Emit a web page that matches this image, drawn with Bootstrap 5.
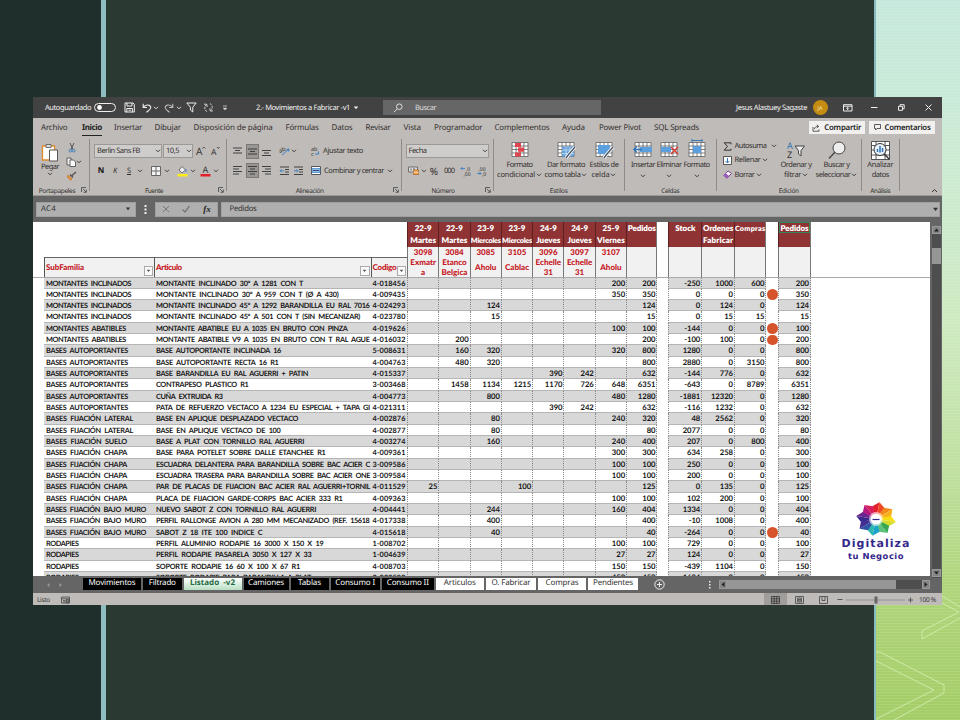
<!DOCTYPE html>
<html lang="es" data-bs-theme="light">
<head>
<meta charset="utf-8">
<title>2.- Movimientos a Fabricar -v1</title>
<link href="https://cdn.jsdelivr.net/npm/bootstrap@5.3.0/dist/css/bootstrap.min.css" rel="stylesheet">
<style>
html,body{width:960px;height:720px;overflow:hidden}
body{font-family:"Noto Sans","Open Sans",sans-serif;font-size:7.5px;line-height:10px;color:#383838;text-rendering:geometricPrecision;
 background:linear-gradient(90deg,#1f2f2b 0 101px,#8fbdc0 101px 106px,#2a3932 106px 874px,#86bcc0 874px 876px,transparent 876px),
 repeating-linear-gradient(0deg,rgba(255,255,255,.1) 0 1px,transparent 1px 3px),
 linear-gradient(180deg,#c6e8dc 0,#cbebd5 20%,#cdeac0 45%,#bfe0a0 65%,#aed57a 82%,#a3cd66 100%)}
svg{display:block;overflow:visible;fill:none;stroke-linecap:butt}
.deco{position:absolute;left:876px;top:580px}
.win{width:909px;height:508px;margin:97px 0 0 33px;background:#656565;overflow:hidden;position:relative}
.trk{display:grid;align-items:center;white-space:nowrap}
.trk>*{min-width:0}
.trk.mid{justify-items:center}
/* title bar */
.tbar{height:21px;background:#424242;color:#f2f2f2;grid-template-columns:12px 49px 29.5px 18.5px 11px 10.5px 12.5px 10px 16.5px 19px 34.5px 97px 6px 24px 218px 135px 76.5px 30.5px 28px 27px 27px 14px}
.toggle{width:22px;height:9px;border:1px solid #eee;border-radius:5px;padding-left:1.5px}
.srch{height:15px;background:#666;color:#ddd;padding-left:10px}
.avatar{width:15px;height:15px;background:#c48d12;font-size:5.5px;color:#f7e3b0}
/* ribbon */
.ribbon{height:78px;background:#bfbbb8;border-bottom:1px solid #999;color:#333130}
.tabs{height:19px;font-size:8px;grid-template-columns:8px 41px 32px 40.5px 39px 92px 46px 34px 38px 30.5px 60.5px 67.5px 37px 55px 154.5px 60.5px 66px}
.tabs .on{font-weight:700;color:#222;border-bottom:1.6px solid #222;width:20px;height:17px;padding-top:4px}
.rbtn{height:13px;background:#f1f0ef;color:#222;font-weight:600;font-size:7.8px}
.grp{height:52px;margin-top:2px;border-right:1px solid #8f8b88;position:relative;flex:none}
.grp .cap{position:absolute;bottom:-5px;left:0;right:0;text-align:center;font-size:6.5px}
.grp .lch{position:absolute;bottom:-2px;right:2px}
.w57{width:57px}.w137{width:137px}.w174{width:174.5px}.w92{width:92px}.w131{width:131.5px}.w91{width:91.5px}.w146{width:145.5px}.w37{width:37.5px}
.combo{background:#cfcdcb;border:1px solid #9b9896;height:14px}
.combo span{margin-left:2px}
.sel{background:#999693;border:1px solid #7b7876;width:13px;height:15px;display:flex;align-items:center;justify-content:center}
.r1{height:20px;padding-top:4px}.r2{height:18px;margin-top:2.5px}
.f1{grid-template-columns:4px 68px 1px 30px 1px 14px 14px}
.f2{grid-template-columns:4px 14px 14px 14px 8px 4px 15px 8px 3px 16px 6px 2px 15px 6px}
.a1{grid-template-columns:3px 15px 14px 14px 4px 14px 6px 11px 14px 42px}
.a2{grid-template-columns:3px 15px 14px 14px 4px 14px 14px 4px 14px 62px 10px}
.n1{grid-template-columns:4px 83px}.n2{grid-template-columns:3px 17px 5px 15px 15px 18px 15px}
.big{line-height:10px;text-align:center}
.big svg.d-inline{margin-left:-1px}
.st{grid-template-columns:52px 41px 35px;justify-items:center;align-items:start}
.ce{grid-template-columns:5px 26px 26px 29px;justify-items:center;align-items:start}
.ed{grid-template-columns:6px 55px 37px 44px;align-items:start}
.ed3{grid-template-columns:12px 32px 10px;height:14.3px}
.ico{height:21px;display:flex;align-items:center;justify-content:center}
.pct{font-size:10px}.bold8{font-size:8px;color:#111}
/* formula bar */
.fbar{height:26px;padding-top:6px;color:#333;font-size:7.8px}
.fbox{height:14.5px;background:#afafaf;border:1px solid #a0a0a0}
.nb{width:100px;margin-left:3px}.dots{margin:3px 7.5px 0 8px}.fx{width:63.5px}.fi{width:719px;margin-left:2.5px}
.fxs{font-family:"Liberation Serif",serif;font-size:9px;color:#222}
/* sheet */
.sheet{width:896.5px;height:353.5px;background:#fff;overflow:hidden;position:relative;color:#161616;font-family:Lato,"Open Sans",sans-serif;font-size:7.7px;font-weight:700}
.cols{display:grid;padding-left:11px;grid-template-columns:110px 216.5px 36.5px repeat(7,31.3px) 31.4px 11px 32.8px 32.7px 32.5px 11.5px 33px}
.hd{height:24.5px;background:#8f3334;color:#fff;line-height:12px;text-align:center;font-size:8px;font-weight:800;border-left:1px solid #5c2020;white-space:nowrap}
.hd .tight{font-size:7.2px}
.sb{height:30px;background:#f1f1f1;color:#c5161d;text-align:center;line-height:10px;border-left:1px solid #777;font-size:8px;font-weight:900}
.sb .one{padding-top:5px}
.lf{height:20px;margin-top:10px;background:#f1f1f1;color:#c5161d;border-left:1px solid #555;border-top:1px solid #666;font-size:8px;font-weight:900;padding:4.5px 1px 0 1px;white-space:nowrap}
.rr{border-right:1px solid #777}
.fil{width:9.5px;height:9.5px;border:1px solid #aaa;background:#fafafa;margin-top:4px;color:#555}
.row-d{height:11.33px;line-height:11px}
.row-d>div{overflow:hidden;white-space:pre;padding-right:1px;border-bottom:.6px solid #b5b5b5}
.row-d>.v{text-align:right;border-left:1px dotted #888;letter-spacing:-.05px}
.row-d>.e{border-right:1px dotted #888}
.row-d>.tx{padding-left:2px;font-size:7.3px;word-spacing:2px}
.row-d>.gap{border:0;padding:0;background:none;overflow:visible}
.odd>div{background:#d8d8d8}
.dot{width:10.8px;height:10.8px;background:#d5542b;border-radius:50%;margin:.4px 0 0 .3px}
.frz{border-top:1px solid #a9a9a9;height:0}
.act{outline:1px solid #35875a;outline-offset:-1px;height:11px}
.logo{position:absolute;left:807px;top:280px;width:72px;color:#33278a;font-family:"DejaVu Sans",sans-serif;text-align:center;line-height:12px}
.logo .l1{font-size:11px;font-weight:700;margin-top:2px}.logo .l2{font-size:8.4px;font-weight:700}
.vsc{width:9px;margin-left:2px;background:#4e4e4e;height:352px}
.sbtn{background:#858585;height:8px;border:1px solid #999}
.thumb{background:#969696;height:16px;margin-top:14px}
.vfill{height:305px}
/* sheet tabs and status */
.stabs{height:15px;font-size:8px}
.stabs .t{height:12px;background:#000;color:#fff;line-height:9px;text-align:center;white-space:nowrap;margin-right:2px}
.stabs .l{background:#fff;color:#333}
.stabs .c{background:linear-gradient(#fff,#b9dfc3);color:#1d6b41;font-weight:700}
.s1{width:58px}.s2{width:38.5px}.s3{width:58px}.s4{width:45px}.s5{width:38px}.s6{width:49.5px}.s7{width:51.5px}.s8{width:48.5px}.s9{width:50px}.s10{width:48px}.s11{width:50px}
.stabs svg,.nav-ar{flex:none}
.nav-ar{width:50px;padding:4px 0 0 13px;gap:9px}
.plus{margin:1px 0 0 14px}.dots2{margin:3px 0 0 44px}
.hsc{width:211px;height:9px;background:#4e4e4e;margin:2px 0 0 8px}
.hth{width:169px;height:9px;background:#969696}
.sq{width:8px;height:9px}
.stat{height:13px;background:#bfbbb8;font-size:6.6px;grid-template-columns:4px 24px 703px 23px 24px 24px 10px 60px 14px 23px}
.foot{height:1.500px;background:#1b1b1b}
.view{background:#a09d9a;height:13px;width:23px;display:grid;place-items:center}
</style>
<script src="https://cdn.jsdelivr.net/npm/bootstrap@5.3.0/dist/js/bootstrap.bundle.min.js"></script>
</head>
<body>
<svg width="0" height="0" class="position-absolute"><defs>
<symbol id="cv" viewBox="0 0 6 4"><path d="M1 .8 3 2.8 5 .8" stroke="currentColor" fill="none" stroke-width=".9"/></symbol>
<symbol id="tri" viewBox="0 0 6 4"><path d="M.8.5h4.4L3 3.2z" fill="currentColor"/></symbol>
<symbol id="lch" viewBox="0 0 6 6"><path d="M.5 5V.5H5M2 2l3 3M5.3 2.6v2.7H2.6" stroke="#444" fill="none" stroke-width=".8"/></symbol>
<symbol id="gr" viewBox="0 0 18 16"><path d="M.5.5h17v15H.5z" fill="#fff"/><path d="M.5.5h17v15H.5zM.5 4.3h17M.5 8h17M.5 11.7h17M4.8.5v15M9 .5v15M13.2.5v15" stroke="#555" fill="none" stroke-width=".8"/></symbol>
</defs></svg>

<svg class="deco" width="84" height="140" stroke="#d3ecae" stroke-width=".9"><path d="M0 72h4L68 105v8L18 140M0 81 58 110 0 139M84 38 46 59v-8L83 32 66 23M66 16 84 27"/></svg>

<div class="win">
 <div class="tbar trk">
  <i></i><span data-w="46">Autoguardado</span>
  <div class="toggle d-flex align-items-center"><svg width="5" height="5"><circle cx="2.5" cy="2.5" r="2.4" fill="#fff"/></svg></div>
  <svg width="11" height="11" viewBox="0 0 11 11" stroke="#eee"><path d="M1 1h8l1.3 1.3V10H1zM3 1v3h5V1M2.8 10V6.5h5.6V10M4.5 8.2h2.4"/></svg>
  <svg width="10" height="10" viewBox="0 0 10 10" stroke="#eee"><path d="M1.2.8v3.7H5M1.3 4.4C3.5 1 8.8 1.2 8.8 4.8 8.6 6.6 6 7.8 4.4 9.4" stroke-width="1.1"/></svg>
  <svg width="6" height="4"><use href="#cv"/></svg>
  <svg width="10" height="10" viewBox="0 0 10 10" stroke="#bbb"><path d="M8.8.8v3.7H5M8.7 4.4C6.5 1 1.2 1.2 1.2 4.8 1.4 6.6 4 7.8 5.6 9.4" stroke-width="1.1"/></svg>
  <svg width="6" height="4"><use href="#cv"/></svg>
  <svg width="11" height="11" viewBox="0 0 11 11" stroke="#eee"><path d="M.8 1h9.4L6.8 5.2V10L4.4 8V5.2z"/></svg>
  <svg width="11" height="11" viewBox="0 0 11 11" stroke="#ccc"><path d="M1 2.2h3v3M4 2.2C1 4 1 8 4 9.5M10 9H7V6M7 9c3-1.6 3-5.6 0-7.5" stroke-dasharray="2.5 .8"/></svg>
  <svg width="6" height="6" stroke="#ddd"><path d="M1 1h4M1.3 3.2 3 4.800 4.700 3.200z" fill="#ddd" stroke-width=".7"/></svg>
  <span data-w="94">2.- Movimientos a Fabricar -v1</span>
  <svg width="6" height="4"><use href="#tri"/></svg><i></i>
  <div class="srch d-flex align-items-center"><svg width="10" height="10" stroke="#ddd"><circle cx="6.3" cy="3.7" r="2.800"/><path d="M4.300 5.700 1 9.200"/></svg><span class="ms-2 ps-1" data-w="21">Buscar</span></div>
  <i></i><span data-w="71">Jesus Alastuey Sagaste</span>
  <div class="avatar rounded-circle d-flex align-items-center justify-content-center">JA</div>
  <svg width="10" height="8" stroke="#eee"><path d="M.5.7h8.500v6.300H.5zM.5 2.200h8.500M4.700 6V3.500M3.500 4.600l1.200-1.200 1.200 1.200"/></svg>
  <svg width="7" height="3" stroke="#eee"><path d="M0 1.500h6.500"/></svg>
  <svg width="7" height="7" stroke="#eee"><path d="M.5 2.300h4v4h-4zM2 2V.7h4.200v4H5"/></svg>
  <svg width="7" height="7" stroke="#eee"><path d="M.5.5l6 6M6.500.5l-6 6"/></svg>
 </div>

 <div class="ribbon">
  <div class="tabs trk">
   <i></i><span data-w="26.5">Archivo</span><div class="on"><span data-w="20">Inicio</span></div><span data-w="28">Insertar</span><span data-w="26.5">Dibujar</span><span data-w="79">Disposición de página</span><span data-w="33">Fórmulas</span><span data-w="21">Datos</span><span data-w="25">Revisar</span><span data-w="17.5">Vista</span><span data-w="48.5">Programador</span><span data-w="55">Complementos</span><span data-w="23">Ayuda</span><span data-w="42">Power Pivot</span><span data-w="45">SQL Spreads</span>
   <div class="rbtn d-flex align-items-center justify-content-center gap-1 me-1"><svg width="8" height="8" stroke="#333" stroke-width=".8"><path d="M1 3v4.200h6V5.500M2.500 5c.3-2 1.500-2.600 3.500-2.600M4.800.8 6.700 2.400 4.800 4"/></svg><span data-w="37">Compartir</span></div>
   <div class="rbtn d-flex align-items-center justify-content-center gap-1"><svg width="7" height="7" stroke="#333" stroke-width=".8"><path d="M.5.5h6v4H3L1.700 6V4.500H.5z"/></svg><span data-w="46">Comentarios</span></div>
  </div>

  <div class="d-flex">
   <div class="grp w57"><div class="d-flex">
     <div class="big ms-2 pt-1"><svg width="18" height="19" viewBox="0 0 18 19"><path d="M1.5 3h12v14h-12z" fill="#fff" stroke="#e08a2c" stroke-width="1.3"/><path d="M5 1.500h5v3H5z" fill="#ddd" stroke="#555" stroke-width=".8"/><path d="M8.500 7h8v11h-8z" fill="#fff" stroke="#555"/></svg><div data-w="18">Pegar</div><svg class="mx-auto" width="6" height="4"><use href="#cv"/></svg></div>
     <div class="ms-2 pt-1 d-flex flex-column gap-1">
      <svg width="10" height="10" stroke="#555"><path d="M3 0 6 6.500M7 0 4 6.500"/><path d="M3.300 6.400a1.300 1.300 0 1 0 .1 2.600A1.300 1.300 0 0 0 3.300 6.400M6.700 6.400a1.300 1.300 0 1 0 .1 2.600 1.300 1.300 0 0 0-.1-2.600" stroke="#3c7fc4"/></svg>
      <div class="d-flex align-items-center"><svg width="9" height="10" stroke="#555" stroke-width=".9"><path d="M0 1h4v7H0z" fill="#eee"/><path d="M3 3h3.500L8.500 5v4.500H3z" fill="#fff"/></svg><svg width="6" height="4"><use href="#cv"/></svg></div>
      <svg width="10" height="10"><path d="M1 4 5 8 3.500 9.500.5 6z" fill="#e9943c" stroke="#b86b1d" stroke-width=".6"/><path d="M3 3.500 6 6.500M5 4.500 9 1" stroke="#555" stroke-width="1.5"/></svg>
     </div></div>
     <div class="cap pe-2"><span data-w="36.5">Portapapeles</span></div><svg class="lch" width="6" height="6"><use href="#lch"/></svg></div>

   <div class="grp w137">
    <div class="trk f1 r1"><i></i><div class="combo d-flex align-items-center justify-content-between"><span data-w="43">Berlin Sans FB</span><svg width="6" height="4"><use href="#cv"/></svg></div><i></i><div class="combo d-flex align-items-center justify-content-between"><span data-w="13">10,5</span><svg width="6" height="4"><use href="#cv"/></svg></div><i></i>
     <svg width="12" height="10"><text x="2" y="9" font-size="10" fill="#333">A</text><path d="M8.500 2.500 9.800 1 11.100 2.500" stroke="#333" stroke-width=".8"/></svg><svg width="12" height="10"><text x="3" y="9" font-size="8.500" fill="#333">A</text><path d="M9 1 10.300 2.500 11.600 1" stroke="#333" stroke-width=".8"/></svg></div>
    <div class="trk f2 r2 mid"><i></i><b class="bold8">N</b><i>K</i><u>S</u><svg width="6" height="4"><use href="#cv"/></svg><i></i>
     <svg width="10" height="10"><path d="M.5.5h9v9h-9zM5 .5v9M.5 5h9" stroke="#666" fill="#f5f5f5"/></svg><svg width="6" height="4"><use href="#cv"/></svg><i></i>
     <svg width="11" height="12"><path d="M2 5 5 1.500 8.500 5 5 8z" fill="#eee" stroke="#555" stroke-width=".8"/><path d="M9 4v3" stroke="#3c7fc4"/><path d="M.5 9h10v2.500H.5z" fill="#ffee10"/></svg><svg width="6" height="4"><use href="#cv"/></svg><i></i>
     <svg width="11" height="12"><text x="2.500" y="8" font-size="9" fill="#333">A</text><path d="M.5 9h10v2.500H.5z" fill="#e3202a"/></svg><svg width="6" height="4"><use href="#cv"/></svg></div>
    <div class="cap pe-2"><span data-w="18">Fuente</span></div><svg class="lch" width="6" height="6"><use href="#lch"/></svg></div>

   <div class="grp w174">
    <div class="trk a1 r1 mid"><i></i><svg width="9" height="9" stroke="#333" stroke-width=".9"><path d="M0 1h9M2 3.500h5M0 6h9"/></svg><div class="sel"><svg width="9" height="9" stroke="#333" stroke-width=".9"><path d="M0 2h9M2 4.500h5M0 7h9"/></svg></div><svg width="9" height="9" stroke="#333" stroke-width=".9"><path d="M0 3.500h9M2 6h5M0 8.500h9"/></svg><i></i>
     <svg width="11" height="10"><text x="0" y="6" font-size="6" fill="#333" transform="rotate(-25 3 5)">ab</text><path d="M3 9 10 3M10 3 7.500 3.500M10 3 9.500 5.500" stroke="#3c7fc4"/></svg><svg width="6" height="4"><use href="#cv"/></svg><i></i>
     <svg width="9" height="10"><text x="0" y="5" font-size="5.5" fill="#333">ab</text><text x="0" y="9.500" font-size="5.5" fill="#333">c</text><path d="M4 8h3.500V5.500" stroke="#3c7fc4"/></svg><span data-w="40">Ajustar texto</span></div>
    <div class="trk a2 r2 mid"><i></i><svg width="9" height="9" stroke="#333" stroke-width=".9"><path d="M0 .5h9M0 3h6M0 5.500h9M0 8h6"/></svg><div class="sel"><svg width="9" height="9" stroke="#333" stroke-width=".9"><path d="M0 .5h9M2 3h5M0 5.500h9M2 8h5"/></svg></div><svg width="9" height="9" stroke="#333" stroke-width=".9"><path d="M0 .5h9M3 3h6M0 5.500h9M3 8h6"/></svg><i></i>
     <svg width="9" height="9" stroke="#333" stroke-width=".9"><path d="M0 1h9M5 3.500h4M5 6h4M0 8.500h9"/><path d="M4 4.800H0M1.500 3.300 0 4.800 1.500 6.300" stroke="#3c7fc4"/></svg><svg width="9" height="9" stroke="#333" stroke-width=".9"><path d="M0 1h9M5 3.500h4M5 6h4M0 8.500h9"/><path d="M0 4.800H4M2.500 3.300 4 4.800 2.500 6.300" stroke="#3c7fc4"/></svg><i></i>
     <svg width="10" height="9"><path d="M.5.5h9v8h-9z" fill="#fff" stroke="#555"/><path d="M1 2.500h8v4H1z" fill="#8fc0ea" stroke="#3c7fc4" stroke-width=".7"/><path d="M2 4.500h6" stroke="#225" stroke-width=".8"/></svg><span data-w="60">Combinar y centrar</span><svg width="6" height="4"><use href="#cv"/></svg></div>
    <div class="cap pe-2"><span data-w="28">Alineación</span></div><svg class="lch" width="6" height="6"><use href="#lch"/></svg></div>

   <div class="grp w92">
    <div class="trk n1 r1"><i></i><div class="combo d-flex align-items-center justify-content-between"><span data-w="18">Fecha</span><svg width="6" height="4"><use href="#cv"/></svg></div></div>
    <div class="trk n2 r2 mid"><i></i><svg width="11" height="9"><path d="M.5 1h9v5h-9z" fill="#ddd" stroke="#555" stroke-width=".8"/><path d="M3 2.500v2M6 2v2" stroke="#555"/><path d="M5.500 4h5v4.500h-5z" fill="#f0a04e" stroke="#a8611a" stroke-width=".7"/><path d="M5.500 6.300h5" stroke="#fff" stroke-width=".6"/></svg><svg width="6" height="4"><use href="#cv"/></svg><span class="pct">%</span><span data-w="10">000</span>
     <svg width="10" height="10"><text x="5" y="5" font-size="5" fill="#333">,0</text><text x="2.500" y="10" font-size="5" fill="#333">,00</text><path d="M4 2.500H0M1.500 1 0 2.500 1.500 4" stroke="#3c7fc4" stroke-width=".9"/></svg><svg width="10" height="10"><text x="1.500" y="5" font-size="5" fill="#333">,00</text><text x="5" y="10" font-size="5" fill="#333">,0</text><path d="M0 7.500h4M2.500 6 4 7.500 2.500 9" stroke="#3c7fc4" stroke-width=".9"/></svg></div>
    <div class="cap pe-2"><span data-w="23">Número</span></div><svg class="lch" width="6" height="6"><use href="#lch"/></svg></div>

   <div class="grp w131"><div class="trk st">
     <div class="big"><div class="ico"><svg width="18" height="15"><use href="#gr"/><path d="M4 1h6v4H4zM4 10.500h6v4H4zM7 5.500h6v4.300H7z" fill="#e2444f"/></svg></div><div><span data-w="26">Formato</span></div><span data-w="38">condicional</span> <svg class="d-inline" width="6" height="4"><use href="#cv"/></svg></div>
     <div class="big"><div class="ico"><svg width="18" height="15"><use href="#gr"/><path d="M5 4.500h12v10H5z" fill="#5b9fde" opacity=".9"/><path d="M5 8h12M5 11.500h12M9 4.500v10M13 4.500v10" stroke="#fff" stroke-width=".5"/><path d="M18 5 12 12 9 16" stroke="#fff" stroke-width="3"/><path d="M18 5 12 12 9 16" stroke="#456" stroke-width="1.3"/></svg></div><div><span data-w="38">Dar formato</span></div><span data-w="36">como tabla</span> <svg class="d-inline" width="6" height="4"><use href="#cv"/></svg></div>
     <div class="big"><div class="ico"><svg width="18" height="15"><use href="#gr"/><path d="M3 3h12v9H3z" fill="#5b9fde"/><path d="M18 5 12 12 9 16" stroke="#fff" stroke-width="3"/><path d="M18 5 12 12 9 16" stroke="#456" stroke-width="1.3"/></svg></div><div><span data-w="29">Estilos de</span></div><span data-w="18">celda</span> <svg class="d-inline" width="6" height="4"><use href="#cv"/></svg></div></div>
    <div class="cap"><span data-w="18">Estilos</span></div></div>

   <div class="grp w91"><div class="trk ce"><i></i>
     <div class="big"><div class="ico"><svg width="18" height="15"><use href="#gr"/><path d="M6 5h12v5H6z" fill="#5b9fde"/><path d="M8 7.500H0M3 4.500 0 7.500 3 10.500" stroke="#2f72b5" stroke-width="1.4"/></svg></div><div><span data-w="24">Insertar</span></div><svg class="mx-auto mt-1" width="6" height="4"><use href="#cv"/></svg></div>
     <div class="big"><div class="ico"><svg width="18" height="15"><use href="#gr"/><path d="M1 5h10v5H1z" fill="#5b9fde"/><path d="M11 5l7 7M18 5l-7 7" stroke="#d8362f" stroke-width="1.3"/></svg></div><div><span data-w="25">Eliminar</span></div><svg class="mx-auto mt-1" width="6" height="4"><use href="#cv"/></svg></div>
     <div class="big"><div class="ico"><svg width="18" height="15"><use href="#gr"/><path d="M5 4h8v7H5z" fill="#5b9fde"/><path d="M4-1.500h10M4-3v3M14-3v3" stroke="#2f72b5" stroke-width=".9"/></svg></div><div><span data-w="26">Formato</span></div><svg class="mx-auto mt-1" width="6" height="4"><use href="#cv"/></svg></div></div>
    <div class="cap"><span data-w="18">Celdas</span></div></div>

   <div class="grp w146"><div class="trk ed"><i></i>
     <div>
      <div class="trk ed3"><svg width="9" height="9" stroke="#333"><path d="M8 2.300V.8H1.200L4.500 4.500 1.200 8.200H8V6.700"/></svg><span data-w="32">Autosuma</span><svg class="ms-1" width="6" height="4"><use href="#cv"/></svg></div>
      <div class="trk ed3"><svg width="9" height="9"><path d="M.5.5h8v8h-8z" fill="#fff" stroke="#555"/><path d="M4.500 2v5M2.500 5l2 2 2-2" stroke="#2f72b5"/></svg><span><span data-w="26">Rellenar</span> <svg class="d-inline" width="6" height="4"><use href="#cv"/></svg></span></div>
      <div class="trk ed3"><svg width="9" height="9"><path d="M.8 5.500 5 1 8.500 3.500 4 8.300z" fill="#fff" stroke="#7b3f98"/><path d="M.8 5.500 2.800 3.400 6.200 6 4 8.300z" fill="#9b57b8"/></svg><span><span data-w="20">Borrar</span> <svg class="d-inline" width="6" height="4"><use href="#cv"/></svg></span></div>
     </div>
     <div class="big"><div class="ico"><svg width="18" height="17"><text x="0" y="8" font-size="9" fill="#2f72b5">A</text><text x="0" y="17" font-size="9" fill="#333">Z</text><path d="M8 5h9.500L14 9.500V15L11.500 13V9.500z" fill="#eee" stroke="#444"/></svg></div><div><span data-w="31">Ordenar y</span></div><span data-w="17">filtrar</span> <svg class="d-inline" width="6" height="4"><use href="#cv"/></svg></div>
     <div class="big"><div class="ico"><svg width="18" height="18"><circle cx="11" cy="7" r="6" fill="#eee" stroke="#444"/><path d="M6.800 11.300 1 17.500" stroke="#444" stroke-width="1.3"/></svg></div><div><span data-w="26">Buscar y</span></div><span data-w="35">seleccionar</span> <svg class="d-inline" width="6" height="4"><use href="#cv"/></svg></div></div>
    <div class="cap"><span data-w="20">Edición</span></div></div>

   <div class="grp w37"><div class="big"><div class="ico"><svg width="19" height="18"><path d="M.5.5h18v18H.5zM.5 4.500h18M.5 9h18M.5 14h18M5 .5v18M14 .5v18" stroke="#444" fill="#fff" stroke-width=".9"/><circle cx="9" cy="8.500" r="6" fill="#e9f1f8" stroke="#333"/><path d="M13.300 13 18.500 18.500" stroke="#333" stroke-width="1.5"/><path d="M6.500 11V8M9 11.500V5M11.500 11V7" stroke="#2f72b5" stroke-width="1.5"/></svg></div><div><span data-w="26">Analizar</span></div><span data-w="17">datos</span></div>
    <div class="cap"><span data-w="20">Análisis</span></div></div>
   <svg class="ms-auto me-1 align-self-end" width="7" height="3" stroke="#333"><path d="M1 4 3.500 1.500 6 4"/></svg>
  </div>
 </div>

 <div class="fbar d-flex">
  <div class="fbox nb d-flex align-items-center justify-content-between"><span class="ms-1" data-w="15">AC4</span><svg class="me-1" width="6" height="4"><use href="#tri"/></svg></div>
  <svg class="dots" width="3" height="9"><path fill="#eee" d="M.5 0h2v2h-2zM.5 3.500h2v2h-2zM.5 7h2v2h-2z"/></svg>
  <div class="fbox fx d-flex align-items-center justify-content-around"><svg width="8" height="8" stroke="#777"><path d="M1 1l6 6M7 1 1 7"/></svg><svg width="8" height="8" stroke="#777"><path d="M.5 4.500 3 7 7.500 1" stroke-width="1.3"/></svg><b class="fst-italic fxs">fx</b></div>
  <div class="fbox fi d-flex align-items-center justify-content-between"><span class="ms-1 ps-1" data-w="27">Pedidos</span><svg width="7" height="5"><use href="#tri"/></svg></div>
 </div>

 <div class="d-flex">
  <div class="sheet">
   <div class="cols" id="h1"></div>
   <div class="cols" id="h2"></div>
   <div class="frz"></div>
   <div id="rows"></div>
   <div class="logo">
    <svg class="mx-auto" width="40" height="34" viewBox="-20 -17 40 34"><g id="petals"></g><circle r="7" fill="#fff" opacity=".6"/><circle r="5.300" fill="#fff"/><path d="M-3.500.5h7" stroke="#33278a" stroke-width="1.200"/></svg>
    <div class="l1"><span data-w="69">Digitaliza</span></div><div class="l2"><span data-w="56">tu Negocio</span></div>
   </div>
  </div>
  <div class="vsc mt-1"><div class="sbtn d-flex align-items-center justify-content-center"><svg width="5" height="4"><path d="M0 3.500h5L2.500.5z" fill="#222"/></svg></div><div class="thumb"></div><div class="vfill"></div><div class="sbtn d-flex align-items-center justify-content-center"><svg width="5" height="4"><path d="M0 .5h5L2.500 3.500z" fill="#222"/></svg></div></div>
 </div>

 <div class="stabs d-flex">
  <div class="nav-ar d-flex"><svg width="4" height="6"><path d="M3.500 1v4L1 3z" fill="#999"/></svg><svg width="4" height="6"><path d="M.5 1v4L3 3z" fill="#999"/></svg></div>
  <div class="t s1"><span data-w="47">Movimientos</span></div><div class="t s2"><span data-w="27">Filtrado</span></div><div class="t c s3"><span data-w="45">Listado&nbsp; -v2</span></div><div class="t s4"><span data-w="36">Camiones</span></div><div class="t s5"><span data-w="23">Tablas</span></div><div class="t s6"><span data-w="40">Consumo I</span></div><div class="t s7"><span data-w="42">Consumo II</span></div><div class="t l s8"><span data-w="32">Articulos</span></div><div class="t l s9"><span data-w="39">O. Fabricar</span></div><div class="t l s10"><span data-w="33">Compras</span></div><div class="t l s11"><span data-w="40">Pendientes</span></div>
  <svg class="plus" width="11" height="11" stroke="#eee"><circle cx="5.500" cy="5.500" r="4.700"/><path d="M3 5.500h5M5.500 3v5"/></svg>
  <svg class="dots2" width="2" height="8"><path fill="#eee" d="M0 0h1.500v1.500H0zM0 3h1.500v1.500H0zM0 6h1.500v1.500H0z"/></svg>
  <div class="hsc d-flex"><div class="sbtn sq d-flex align-items-center justify-content-center"><svg width="4" height="5"><path d="M3.500 0v5L.5 2.500z" fill="#222"/></svg></div><div class="hth"></div><div class="sbtn sq ms-auto d-flex align-items-center justify-content-center"><svg width="4" height="5"><path d="M.5 0v5L3.500 2.500z" fill="#222"/></svg></div></div>
 </div>
 <div class="stat trk">
  <i></i><span data-w="13">Listo</span>
  <svg width="10" height="8" stroke="#444" stroke-width=".8"><path d="M.5 1h8v6h-8zM.5 2.800h8M2 4.500h2M2 6h2"/><circle cx="6.500" cy="5.200" r="1.800" fill="#777"/></svg>
  <div class="view"><svg width="9" height="8" stroke="#333" stroke-width=".8"><path d="M.5.5h8v7h-8zM3.200.5v7M5.800.5v7M.5 2.800h8M.5 5.200h8"/></svg></div>
  <svg class="mx-auto" width="9" height="8" stroke="#444" stroke-width=".8"><path d="M.5.5h8v7h-8zM2.500 2h4v4h-4zM3 3.500h3M3 4.800h3"/></svg>
  <svg class="mx-auto" width="9" height="8" stroke="#444" stroke-width=".8"><path d="M.5.5h8v7h-8zM3 .5v4h3v-4"/></svg>
  <svg width="10" height="5" stroke="#555"><path d="M2.500 2.500h5"/></svg>
  <svg width="60" height="8"><path d="M1 4h59" stroke="#888" stroke-width=".8"/><path d="M29.500.5h3v7h-3z" fill="#666"/></svg>
  <svg width="8" height="6" stroke="#555"><path d="M3 3h5M5.500.5v5"/></svg>
  <span data-w="17">100 %</span>
 </div>
 <div class="foot"></div>
</div>
<script>
const heads=[['22-9','Martes','3098','Exmatr','a'],['22-9','Martes','3084','Etanco','Belgica'],['23-9','Miercoles','3085','Aholu'],['23-9','Miercoles','3105','Cablac'],['24-9','Jueves','3096','Echelle','31'],['24-9','Jueves','3097','Echelle','31'],['25-9','Viernes','3107','Aholu']];
const fil='<div class="fil d-flex align-items-center justify-content-center"><svg width="5" height="4"><use href="#tri"/></svg></div>';
document.getElementById('h1').innerHTML='<i></i><i></i><i></i>'+heads.map(h=>`<div class="hd">${h[0]}<br>${h[1]=='Miercoles'?'<span class="tight" data-w="30">Miercoles</span>':h[1]}</div>`).join('')
 +'<div class="hd rr"><span data-w="28">Pedidos</span></div><i></i><div class="hd">Stock</div><div class="hd"><span data-w="30">Ordenes</span><br><span data-w="30">Fabricar</span></div><div class="hd rr"><span class="tight" data-w="30.5">Compras</span></div><i></i><div class="hd rr"><div class="act"><span data-w="28">Pedidos</span></div></div>';
const lf=(t,w)=>`<div class="lf d-flex justify-content-between"><span data-w="${w}">${t}</span>${fil}</div>`;
document.getElementById('h2').innerHTML=lf('SubFamilia',38)+lf('Articulo',26)+lf('Codigo',24)
 +heads.map(h=>`<div class="sb">${h[2]}${h[4]?`<br>${h[3]}<br>${h[4]}`:`<div class="one">${h[3]}</div>`}</div>`).join('')
 +'<div class="sb rr"></div><i></i><div class="sb"></div><div class="sb"></div><div class="sb rr"></div><i></i><div class="sb rr"></div>';
const MI=['MONTANTES INCLINADOS',85],MA=['MONTANTES ABATIBLES',80],BA=['BASES AUTOPORTANTES',82],FL=['BASES FIJACIÓN LATERAL',87],FS=['BASES FIJACIÓN SUELO',81],FC=['BASES FIJACIÓN CHAPA',81],FM=['BASES FIJACIÓN BAJO MURO',100],RO=['RODAPIES',32.5];
const _='';
const data=[
[MI,'MONTANTE INCLINADO 30º A 1281 CON T',147,'4-018456',_,_,_,_,_,_,200,200,-250,1000,600],
[MI,'MONTANTE INCLINADO 30º A 959 CON T (Ø A 430)',182.5,'4-009435',_,_,_,_,_,_,350,350,0,0,0,1],
[MI,'MONTANTE INCLINADO 45º A 1292 BARANDILLA EU RAL 7016',213.5,'4-024293',_,_,124,_,_,_,_,124,0,124,0],
[MI,'MONTANTE INCLINADO 45º A 501 CON T (SIN MECANIZAR)',204,'4-023780',_,_,15,_,_,_,_,15,0,15,15],
[MA,'MONTANTE ABATIBLE EU A 1035 EN BRUTO CON PINZA',191.5,'4-019626',_,_,_,_,_,_,100,100,-144,0,0,1],
[MA,'MONTANTE ABATIBLE V9 A 1035 EN BRUTO CON T RAL AGUE',213.5,'4-016032',_,200,_,_,_,_,_,200,-100,100,0,1],
[BA,'BASE AUTOPORTANTE INCLINADA 16',125,'5-008631',_,160,320,_,_,_,320,800,1280,0,0],
[BA,'BASE AUTOPORTANTE RECTA 16 R1',122.5,'4-004763',_,480,320,_,_,_,_,800,2880,0,3150],
[BA,'BASE BARANDILLA EU RAL AGUERRI + PATIN',152,'4-015337',_,_,_,_,390,242,_,632,-144,776,0],
[BA,'CONTRAPESO PLASTICO R1',92.5,'3-003468',_,1458,1134,1215,1170,726,648,6351,-643,0,8789],
[BA,'CUÑA EXTRUIDA R3',66.5,'4-004773',_,_,800,_,_,_,480,1280,-1881,12320,0],
[BA,'PATA DE REFUERZO VECTACO A 1234 EU ESPECIAL + TAPA GI',214,'4-021311',_,_,_,_,390,242,_,632,-116,1232,0],
[FL,'BASE EN APLIQUE DESPLAZADO VECTACO',142,'4-002876',_,_,80,_,_,_,240,320,48,2562,0],
[FL,'BASE EN APLIQUE VECTACO DE 100',124.5,'4-002877',_,_,80,_,_,_,_,80,2077,0,0],
[FS,'BASE A PLAT CON TORNILLO RAL AGUERRI',148,'4-003274',_,_,160,_,_,_,240,400,207,0,800],
[FC,'BASE PARA POTELET SOBRE DALLE ETANCHEE R1',169.5,'4-009361',_,_,_,_,_,_,300,300,634,258,0],
[FC,'ESCUADRA DELANTERA PARA BARANDILLA SOBRE BAC ACIER C',214,'3-009586',_,_,_,_,_,_,100,100,250,0,0],
[FC,'ESCUADRA TRASERA PARA BARANDILLA SOBRE BAC ACIER ONE',214,'3-009584',_,_,_,_,_,_,100,100,200,0,0],
[FC,'PAR DE PLACAS DE FIJACION BAC ACIER RAL AGUERRI+TORNIL',214,'4-011529',25,_,_,100,_,_,_,125,0,135,0],
[FC,'PLACA DE FIJACION GARDE-CORPS BAC ACIER 333 R1',186.5,'4-009363',_,_,_,_,_,_,100,100,102,200,0],
[FM,'NUEVO SABOT Z CON TORNILLO RAL AGUERRI',160,'4-004441',_,_,244,_,_,_,160,404,1334,0,0],
[FM,'PERFIL RALLONGE AVION A 280 MM MECANIZADO (REF. 15618',213.5,'4-017338',_,_,400,_,_,_,_,400,-10,1008,0],
[FM,'SABOT Z 18 ITE 100 INDICE C',106.5,'4-015618',_,_,40,_,_,_,_,40,-264,0,0,1],
[RO,'PERFIL ALUMINIO RODAPIE 16 3000 X 150 X 19',167.5,'1-008702',_,_,_,_,_,_,100,100,729,0,0],
[RO,'PERFIL RODAPIE PASARELA 3050 X 127 X 33',155.5,'1-004639',_,_,_,_,_,_,27,27,124,0,0],
[RO,'SOPORTE RODAPIE 16 60 X 100 X 67 R1',144,'4-008703',_,_,_,_,_,_,150,150,-439,1104,0],
[RO,'SOPORTE RODAPIE PARA BARANDILLA A PLAT',155,'3-009599',_,_,_,_,_,_,450,450,1604,0,0]];
document.getElementById('rows').innerHTML=data.map((r,i)=>{
 const v=r.slice(4,15),c=(x,e)=>`<div class="v${e?' e':''}">${x}</div>`;
 return `<div class="cols row-d${i%2?'':' odd'}"><div class="tx"><span data-w="${r[0][1]}">${r[0][0]}</span></div><div class="tx"><span data-w="${r[2]}">${r[1]}</span></div><div class="tx"><span data-w="33">${r[3]}</span></div>`
 +v.slice(0,8).map((x,k)=>c(x,k==7)).join('')+'<div class="gap"></div>'+v.slice(8).map((x,k)=>c(x,k==2)).join('')
 +`<div class="gap">${r[15]?'<div class="dot"></div>':''}</div>`+c(r[11],1)+'</div>'}).join('');
/* eight-pointed rosette */
const pal=['#e5202b','#f08a1d','#f6dd12','#35a852','#19a5c9','#2e55a5','#3b2a8c','#b5177f'];
const alt=['#ee4a24','#f7b21a','#d3dc2a','#5cc07c','#2fb6b0','#432f92','#6a2590','#d81f5a'];
document.getElementById('petals').innerHTML=pal.map((p,i)=>`<g transform="scale(1.180 1) rotate(${i*45+10})"><path d="M0 0-5.200-12 0-17z" fill="${p}"/><path d="M0 0V-17L5.200-12z" fill="${alt[i]}"/></g>`).join('');
/* spread letters so that each label fills its slot */
document.querySelectorAll('[data-w]').forEach(e=>{
 const g=document.createRange();g.selectNodeContents(e);
 const n=g.getBoundingClientRect().width,l=e.textContent.length;
 e.style.letterSpacing=((+e.dataset.w-n)/l).toFixed(3)+'px'});
</script>
</body>
</html>
